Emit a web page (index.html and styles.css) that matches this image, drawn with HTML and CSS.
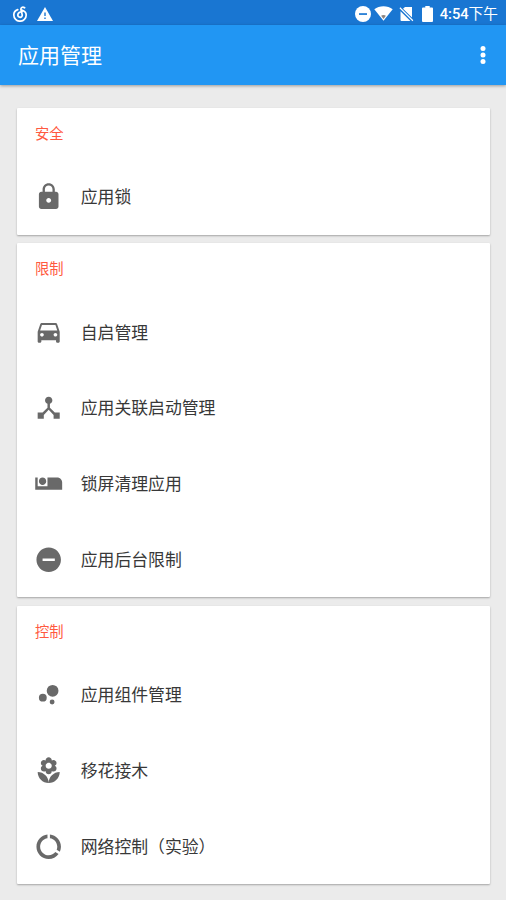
FILE: index.html
```html
<!DOCTYPE html>
<html lang="zh-CN">
<head>
<meta charset="utf-8">
<title>应用管理</title>
<link rel="stylesheet" href="styles.css">
</head>
<body>
<header class="status">
  <svg class="music" viewBox="0 0 16 16"><path d="M9.8 4.1C11.6 4.6 14.2 6 14.2 9a6.2 6.2 0 0 1-12.4 0c0-2.7 1.4-4.6 3.9-5.4M12.6 1.8c-2-1.5-4.1-.2-3.6 1.9l1.2 5.1c.5 3.4-4.6 3.2-4.4.1.2-2.2 2.3-3.3 4.2-3.1"/></svg>
  <svg class="warning" viewBox="0 0 18 16"><path d="M9 1 1 15h16z"/><path class="cut" d="M8.3 6.5h1.4V10H8.3zM8.3 11.4h1.4v1.5H8.3z"/></svg>
  <span class="spacer"></span>
  <svg class="dnd" viewBox="0 0 16 16"><circle cx="8" cy="8" r="8"/><path class="cut" d="M4 7.2h8v1.7H4z"/></svg>
  <svg class="wifi" viewBox="0 0 19 15"><path d="M9.5 14.8.3 3.3C5.2-.8 13.8-.8 18.7 3.3z"/><path class="signal" d="m9.5 13-2.4-3.2c1.3-1 3.5-1 4.8 0z"/></svg>
  <svg class="sim" viewBox="0 0 15 16"><path d="M6 1h7v10.5L4 2.8zM1.5 5.3 11.4 15H2.5q-1 0-1-1zM1.3 1.3l13 13-.8.9-13-13z"/></svg>
  <svg class="battery" viewBox="0 0 11 16"><path d="M3.3 0h4.4v1.6H10q1 0 1 1V15q0 1-1 1H1q-1 0-1-1V2.6q0-1 1-1h2.3z"/></svg>
  <span class="time">4:54<span class="period">下午</span></span>
</header>
<div class="toolbar">
  <h1>应用管理</h1>
  <svg class="more" viewBox="0 0 6 20"><circle cx="3" cy="3.4" r="2.5"/><circle cx="3" cy="10" r="2.5"/><circle cx="3" cy="16.6" r="2.5"/></svg>
</div>
<main>
  <section class="card">
    <h2>安全</h2>
    <div class="row"><svg viewBox="0 0 24 24"><path d="M18 8h-1V6c0-2.76-2.24-5-5-5S7 3.24 7 6v2H6c-1.1 0-2 .9-2 2v10c0 1.1.9 2 2 2h12c1.1 0 2-.9 2-2V10c0-1.1-.9-2-2-2zm-6 9c-1.1 0-2-.9-2-2s.9-2 2-2 2 .9 2 2-.9 2-2 2zm3.1-9H8.9V6c0-1.71 1.39-3.1 3.1-3.1 1.71 0 3.1 1.39 3.1 3.1v2z"/></svg><span>应用锁</span></div>
  </section>
  <section class="card">
    <h2>限制</h2>
    <div class="row"><svg viewBox="0 0 24 24"><path d="M18.92 6.01C18.72 5.42 18.16 5 17.5 5h-11c-.66 0-1.21.42-1.42 1.01L3 12v8c0 .55.45 1 1 1h1c.55 0 1-.45 1-1v-1h12v1c0 .55.45 1 1 1h1c.55 0 1-.45 1-1v-8l-2.08-5.99zM6.5 16c-.83 0-1.5-.67-1.5-1.5S5.67 13 6.5 13s1.5.67 1.5 1.5S7.33 16 6.5 16zm11 0c-.83 0-1.5-.67-1.5-1.5s.67-1.5 1.5-1.5 1.5.67 1.5 1.5-.67 1.5-1.5 1.5zM5 11l1.5-4.5h11L19 11H5z"/></svg><span>自启管理</span></div>
    <div class="row"><svg viewBox="0 0 24 24"><path d="M17 16l-4-4V8.82C14.16 8.4 15 7.3 15 6c0-1.66-1.34-3-3-3S9 4.34 9 6c0 1.3.84 2.4 2 2.82V12l-4 4H3v5h5v-3.05l4-4.2 4 4.2V21h5v-5h-4z"/></svg><span>应用关联启动管理</span></div>
    <div class="row"><svg viewBox="0 0 24 24"><path d="M7 13c1.65 0 3-1.35 3-3S8.65 7 7 7s-3 1.35-3 3 1.35 3 3 3zm12-6h-8v7H3V7H1v10h22v-6c0-2.21-1.79-4-4-4z"/></svg><span>锁屏清理应用</span></div>
    <div class="row"><svg viewBox="0 0 24 24"><path d="M12 2C6.48 2 2 6.48 2 12s4.48 10 10 10 10-4.48 10-10S17.52 2 12 2zm5 11H7v-2h10v2z"/></svg><span>应用后台限制</span></div>
  </section>
  <section class="card">
    <h2>控制</h2>
    <div class="row"><svg viewBox="0 0 24 24"><circle cx="7.2" cy="14.4" r="3.2"/><circle cx="14.8" cy="18" r="2"/><circle cx="15.2" cy="8.8" r="4.8"/></svg><span>应用组件管理</span></div>
    <div class="row"><svg viewBox="0 0 24 24"><path d="M12 22c4.97 0 9-4.03 9-9-4.97 0-9 4.03-9 9zM5.6 10.25c0 1.38 1.12 2.5 2.5 2.5.53 0 1.01-.16 1.42-.44l-.02.19c0 1.38 1.12 2.5 2.5 2.5s2.5-1.12 2.5-2.5l-.02-.19c.4.28.89.44 1.42.44 1.38 0 2.5-1.12 2.5-2.5 0-1-.59-1.85-1.43-2.25.84-.4 1.43-1.25 1.43-2.25 0-1.38-1.12-2.5-2.5-2.5-.53 0-1.01.16-1.42.44l.02-.19C14.5 2.12 13.38 1 12 1S9.5 2.12 9.5 3.5l.02.19c-.4-.28-.89-.44-1.42-.44-1.38 0-2.5 1.12-2.5 2.5 0 1 .59 1.85 1.43 2.25-.84.4-1.43 1.25-1.43 2.25zM12 5.5c1.38 0 2.5 1.12 2.5 2.5s-1.12 2.5-2.5 2.5S9.5 9.38 9.5 8s1.12-2.5 2.5-2.5zM3 13c0 4.97 4.03 9 9 9 0-4.97-4.03-9-9-9z"/></svg><span>移花接木</span></div>
    <div class="row"><svg viewBox="0 0 24 24"><path d="M13 2.05v3.03c3.39.49 6 3.39 6 6.92 0 .9-.18 1.75-.48 2.54l2.6 1.53c.56-1.24.88-2.62.88-4.07 0-5.18-3.95-9.45-9-9.95zM12 19c-3.87 0-7-3.13-7-7 0-3.53 2.61-6.43 6-6.92V2.05c-5.06.5-9 4.76-9 9.95 0 5.52 4.47 10 9.99 10 3.31 0 6.24-1.61 8.06-4.09l-2.6-1.53C16.17 17.98 14.21 19 12 19z"/></svg><span>网络控制（实验）</span></div>
  </section>
</main>
</body>
</html>
```
FILE: styles.css
```css
* { box-sizing: border-box; }
body {
  margin: 0;
  height: 900px;
  overflow: hidden;
  background: #ebebeb;
  font-family: Roboto, "Noto Sans CJK SC", sans-serif;
}
svg { display: block; flex: none; }
.status {
  display: flex;
  align-items: center;
  height: 25px;
  padding: 2px 8px 0 12px;
  background: #1976d2;
  color: #fff;
  fill: #fff;
}
.music { width: 16px; height: 16px; fill: none; stroke: #fff; stroke-width: 1.7; stroke-linecap: round; }
.warning { width: 18px; height: 16px; margin-left: 8px; }
.cut { fill: #1976d2; }
.spacer { flex: 1; }
.dnd { width: 16px; height: 16px; }
.wifi { width: 19px; height: 15px; margin-left: 3px; }
.signal { fill: #8b8582; }
.sim { width: 15px; height: 16px; margin-left: 6px; }
.battery { width: 11px; height: 16px; margin-left: 8px; }
.time { margin-left: 7px; font-size: 14.7px; line-height: 20px; font-weight: 500; white-space: nowrap; }
.period { font-weight: 400; }
.toolbar {
  display: flex;
  align-items: center;
  justify-content: space-between;
  height: 60px;
  padding: 0 20px 0 18px;
  background: #2196f3;
  box-shadow: 0 1px 3px rgba(0, 0, 0, .35);
}
h1 { margin: 0; padding-top: 1px; color: #fff; font-size: 21px; line-height: 30px; font-weight: 400; }
.more { width: 6px; height: 20px; fill: #fff; }
main { display: flex; flex-direction: column; gap: 8.4px; padding: 23px 16px 0 17px; }
.card { background: #fff; border-radius: 1px; box-shadow: 0 1px 2px rgba(0, 0, 0, .3); }
h2 {
  margin: 0;
  height: 51px;
  padding-left: 18px;
  color: #ff5940;
  font-size: 14.3px;
  line-height: 53px;
  font-weight: 400;
}
.row {
  display: flex;
  align-items: center;
  gap: 17px;
  height: 75.8px;
  padding-left: 17.3px;
  color: #383838;
  font-size: 16.85px;
  line-height: 24px;
}
.row span { padding-top: 1px; }
.row svg { width: 29.4px; height: 29.4px; fill: #696969; }
```
